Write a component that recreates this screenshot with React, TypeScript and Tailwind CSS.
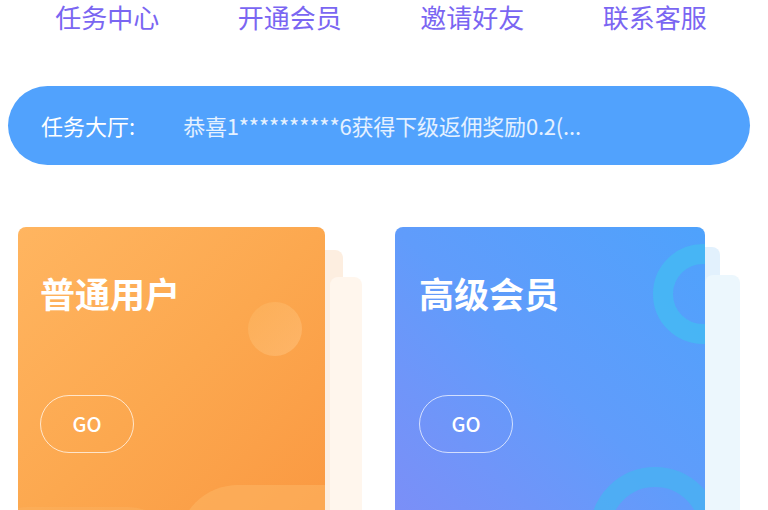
import React from "react";

const navItems = ["任务中心", "开通会员", "邀请好友", "联系客服"];

const font = { fontFamily: '"Noto Sans CJK SC", "Noto Sans", sans-serif' };

function GoButton() {
  return (
    <div className="w-[94px] h-[58px] rounded-full border border-white/70 flex items-center justify-center text-white text-[20px] font-medium">
      GO
    </div>
  );
}

export default function App() {
  return (
    <div className="w-[768px] h-[510px] overflow-hidden bg-white" style={font}>
      {/* Top nav */}
      <div className="grid grid-cols-4 w-[730px] ml-[16px] h-[36px] items-start">
        {navItems.map((item) => (
          <div
            key={item}
            className="text-center text-[26px] leading-[34px] text-[#7a66f2]"
          >
            {item}
          </div>
        ))}
      </div>

      {/* Ticker */}
      <div className="mt-[50px] ml-[8px] w-[742px] h-[79px] rounded-full bg-[#51a2fd] flex items-center pl-[33px] text-[22px]">
        <span className="text-white">任务大厅:</span>
        <span className="ml-[48px] text-white/85 tracking-[-0.2px]">
          恭喜1**********6获得下级返佣奖励0.2(...
        </span>
      </div>

      {/* Cards */}
      <div className="flex mt-[62px] pl-[18px] gap-[70px]">
        {/* Normal user */}
        <div className="relative w-[307px] h-[300px]">
          <div className="absolute left-[280px] top-[23px] w-[45px] h-[300px] rounded-[8px] bg-[#fdeee0]" />
          <div className="absolute left-[312px] top-[50px] w-[32px] h-[300px] rounded-[8px] bg-[#fff6ed]" />
          <div className="relative h-full rounded-[8px] overflow-hidden bg-gradient-to-br from-[#ffb560] via-[#fca84f] to-[#fa9841] px-[22px] pt-[48px]">
            <div className="absolute left-[230px] top-[75px] w-[54px] h-[54px] rounded-full bg-gradient-to-br from-[#fcb45e] to-[#ffc07a] opacity-60" />
            <div className="absolute left-[160px] top-[258px] w-[240px] h-[120px] rounded-full bg-[#fdb463]/60" />
            <div className="absolute -left-[40px] top-[280px] w-[200px] h-[100px] rounded-full bg-[#fdb463]/40" />
            <div className="relative text-white text-[35px] font-bold leading-none">普通用户</div>
            <div className="relative mt-[85px]">
              <GoButton />
            </div>
          </div>
        </div>

        {/* Premium */}
        <div className="relative w-[310px] h-[300px]">
          <div className="absolute left-[290px] top-[20px] w-[35px] h-[300px] rounded-[8px] bg-[#e2f1fd]" />
          <div className="absolute left-[310px] top-[48px] w-[35px] h-[300px] rounded-[8px] bg-[#ecf7fd]" />
          <div className="relative h-full rounded-[8px] overflow-hidden bg-gradient-to-tr from-[#7c8ef7] via-[#609cfb] to-[#4ea2fc] px-[24px] pt-[48px]">
            <div className="absolute left-[258px] top-[17px] w-[100px] h-[100px] rounded-full border-[20px] border-[#45b8f3]/85" />
            <div className="absolute left-[195px] top-[240px] w-[130px] h-[130px] rounded-full border-[20px] border-[#48b2f2]/80" />
            <div className="relative text-white text-[35px] font-bold leading-none">高级会员</div>
            <div className="relative mt-[85px]">
              <GoButton />
            </div>
          </div>
        </div>
      </div>
    </div>
  );
}
